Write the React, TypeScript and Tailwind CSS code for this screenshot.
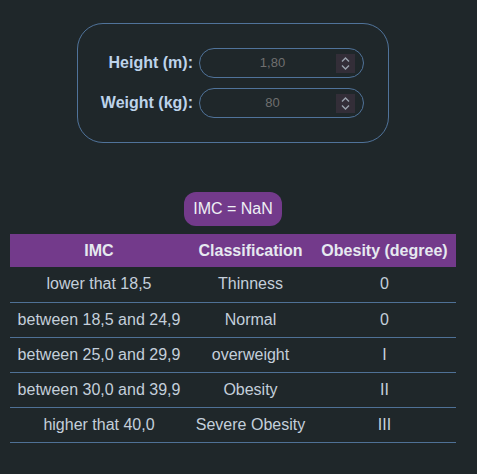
import { useState } from "react";

const rows = [
  { range: "lower that 18,5", label: "Thinness", degree: "0" },
  { range: "between 18,5 and 24,9", label: "Normal", degree: "0" },
  { range: "between 25,0 and 29,9", label: "overweight", degree: "I" },
  { range: "between 30,0 and 39,9", label: "Obesity", degree: "II" },
  { range: "higher that 40,0", label: "Severe Obesity", degree: "III" },
];

function Spinner() {
  return (
    <div className="flex h-[19px] w-[19px] flex-col items-center justify-center gap-[3px] bg-[#332e38]">
      <svg width="9" height="5" viewBox="0 0 9 5" fill="none">
        <path d="M1 4.5L4.5 1L8 4.5" stroke="#9aa3ad" strokeWidth="1.4" />
      </svg>
      <svg width="9" height="5" viewBox="0 0 9 5" fill="none">
        <path d="M1 0.5L4.5 4L8 0.5" stroke="#9aa3ad" strokeWidth="1.4" />
      </svg>
    </div>
  );
}

function Field({ label, value }: { label: string; value: string }) {
  return (
    <div className="flex items-center justify-end gap-[6px]">
      <span className="whitespace-nowrap text-[16px] font-bold text-[#bdd3ea]">{label}</span>
      <div className="relative flex h-[30px] w-[165px] shrink-0 items-center justify-center rounded-full border border-[#50739a] pr-[18px]">
        <span className="text-[13px] text-[#6f6f6f]">{value}</span>
        <div className="absolute right-[8px] top-[5px]">
          <Spinner />
        </div>
      </div>
    </div>
  );
}

export default function App() {
  const [height] = useState("1,80");
  const [weight] = useState("80");

  return (
    <div
      className="min-h-[474px] w-[477px] bg-[#1f272a] px-[10px] pt-[23px] text-[#c4cfdb]"
      style={{ fontFamily: '"Liberation Sans", Arial, sans-serif' }}
    >
      <div className="flex w-[446px] flex-col items-center">
        <div className="flex w-[312px] flex-col gap-[10px] rounded-[26px] border border-[#50739a] px-[24px] py-[24px]">
          <Field label="Height (m):" value={height} />
          <Field label="Weight (kg):" value={weight} />
        </div>

        <div className="mt-[49px] flex h-[34px] items-center rounded-[12px] bg-[#733a8b] px-[9px] text-[16px] text-[#eef0f4]">
          IMC = NaN
        </div>

        <table className="mt-[8px] w-[446px] table-fixed border-collapse text-center text-[16px]">
          <colgroup>
            <col className="w-[178px]" />
            <col className="w-[125px]" />
            <col className="w-[143px]" />
          </colgroup>
          <thead>
            <tr className="h-[33px] bg-[#733a8b] text-[#e6e9f0]">
              <th className="font-bold">IMC</th>
              <th className="font-bold">Classification</th>
              <th className="font-bold">Obesity (degree)</th>
            </tr>
          </thead>
          <tbody>
            {rows.map((r) => (
              <tr key={r.range} className="h-[35px] border-b border-[#4f7196]">
                <td>{r.range}</td>
                <td>{r.label}</td>
                <td>{r.degree}</td>
              </tr>
            ))}
          </tbody>
        </table>
      </div>
    </div>
  );
}
